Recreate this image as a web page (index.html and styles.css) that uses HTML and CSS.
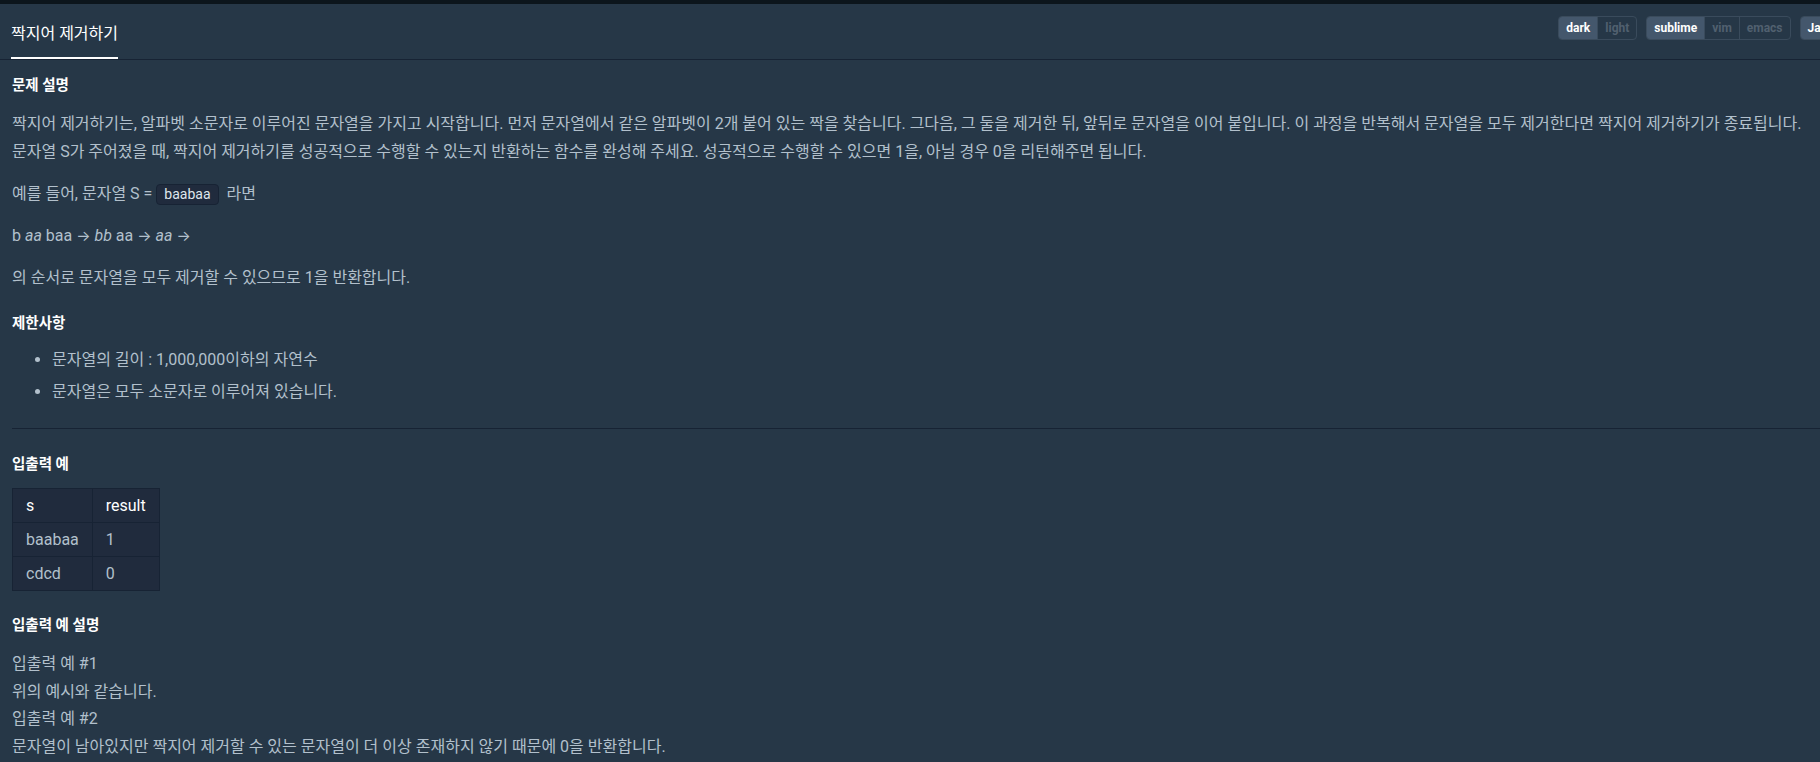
FILE: index.html
```html
<!DOCTYPE html>
<html lang="ko">
<head>
    <meta charset="UTF-8">
    <meta name="viewport" content="width=device-width, initial-scale=1.0">
    <title>짝지어 제거하기</title>
    <link rel="stylesheet" href="styles.css">
</head>
<body>
    <div class="topline"></div>
    <div class="header">
        <div class="tab">짝지어 제거하기</div>
        <div class="toolbar">
            <div class="btn-group">
                <span class="btn active">dark</span>
                <span class="btn">light</span>
            </div>
            <div class="btn-group">
                <span class="btn active">sublime</span>
                <span class="btn">vim</span>
                <span class="btn">emacs</span>
            </div>
            <div class="btn-group">
                <span class="btn active">JavaScript</span>
            </div>
        </div>
    </div>
    <div class="content">
        <h5>문제 설명</h5>
        <p>짝지어 제거하기는, 알파벳 소문자로 이루어진 문자열을 가지고 시작합니다. 먼저 문자열에서 같은 알파벳이 2개 붙어 있는 짝을 찾습니다. 그다음, 그 둘을 제거한 뒤, 앞뒤로 문자열을 이어 붙입니다. 이 과정을 반복해서 문자열을 모두 제거한다면 짝지어 제거하기가 종료됩니다.<br>
        문자열 S가 주어졌을 때, 짝지어 제거하기를 성공적으로 수행할 수 있는지 반환하는 함수를 완성해 주세요. 성공적으로 수행할 수 있으면 1을, 아닐 경우 0을 리턴해주면 됩니다.</p>
        <p>예를 들어, 문자열 S = <code>baabaa</code> 라면</p>
        <p>b <em>aa</em> baa <span class="arrow">→</span> <em>bb</em> aa <span class="arrow">→</span> <em>aa</em> <span class="arrow">→</span></p>
        <p>의 순서로 문자열을 모두 제거할 수 있으므로 1을 반환합니다.</p>

        <h5 class="limits">제한사항</h5>
        <ul>
            <li>문자열의 길이 : 1,000,000이하의 자연수</li>
            <li>문자열은 모두 소문자로 이루어져 있습니다.</li>
        </ul>

        <hr>

        <h5 class="section">입출력 예</h5>
        <table>
            <thead>
                <tr><th>s</th><th>result</th></tr>
            </thead>
            <tbody>
                <tr><td>baabaa</td><td>1</td></tr>
                <tr><td>cdcd</td><td>0</td></tr>
            </tbody>
        </table>

        <h5 class="section explain">입출력 예 설명</h5>
        <p class="plain">입출력 예 #1<br>
        위의 예시와 같습니다.<br>
        입출력 예 #2<br>
        문자열이 남아있지만 짝지어 제거할 수 있는 문자열이 더 이상 존재하지 않기 때문에 0을 반환합니다.</p>
    </div>
</body>
</html>
```

FILE: styles.css
```css
html, body {
    margin: 0;
    height: 100%;
}
body {
    background-color: #263747;
    color: #b2c0cc;
    font-family: Roboto, "Noto Sans CJK KR", sans-serif;
    overflow: hidden;
}
.topline {
    height: 4px;
    background-color: #0c151c;
}
.header {
    display: flex;
    align-items: stretch;
    height: 55px;
    border-bottom: 1px solid #172334;
    padding-left: 11px;
    overflow: hidden;
}
.tab {
    display: flex;
    align-items: center;
    padding-top: 2px;
    font-size: 16px;
    color: #ffffff;
    border-bottom: 3px solid #ffffff;
    margin-bottom: -1px;
}
.toolbar {
    display: flex;
    align-items: flex-start;
    gap: 9px;
    margin-left: auto;
    margin-right: -53px;
    padding-top: 12px;
}
.btn-group {
    display: flex;
    border: 1px solid #3a4b5c;
    border-radius: 4px;
    overflow: hidden;
}
.btn {
    height: 22px;
    line-height: 22px;
    padding: 0 7px;
    font-size: 12px;
    font-weight: bold;
    color: #51606f;
    border-left: 1px solid #3a4b5c;
}
.btn:first-child {
    border-left: none;
}
.btn.active {
    background-color: #44576c;
    color: #ffffff;
}
.content {
    padding: 0 0 0 12px;
    font-size: 16px;
}
h5 {
    margin: 16px 0 0;
    font-size: 14.5px;
    line-height: 20px;
    color: #ffffff;
    font-weight: bold;
}
h5.limits {
    margin-top: 22px;
}
h5.section {
    margin-top: 26px;
}
h5.explain {
    margin-top: 25px;
}
p {
    margin: 14px 0 0;
    line-height: 28px;
}
code {
    display: inline-block;
    font-family: Roboto, sans-serif;
    font-size: 14px;
    line-height: 19px;
    padding: 0 7px;
    margin-right: 4px;
    color: #dfe6ec;
    background-color: #202b3d;
    border: 1px solid #172334;
    border-radius: 4px;
}
em {
    font-style: italic;
}
.arrow {
    font-family: Inter, sans-serif;
    font-size: 15px;
}
ul {
    margin: 14px 0 0;
    padding-left: 40px;
}
li {
    line-height: 24px;
    margin-bottom: 8px;
}
hr {
    margin: 24px 0 0;
    border: none;
    border-top: 1px solid #172334;
}
table {
    margin-top: 13px;
    border-collapse: collapse;
    background-color: #202b3d;
}
th, td {
    border: 1px solid #172334;
    height: 33px;
    padding: 0 13px;
    text-align: left;
    font-weight: normal;
}
th {
    color: #ffffff;
}
td {
    color: #b2c0cc;
}
p.plain {
    margin-top: 14px;
    line-height: 27.5px;
}
```
